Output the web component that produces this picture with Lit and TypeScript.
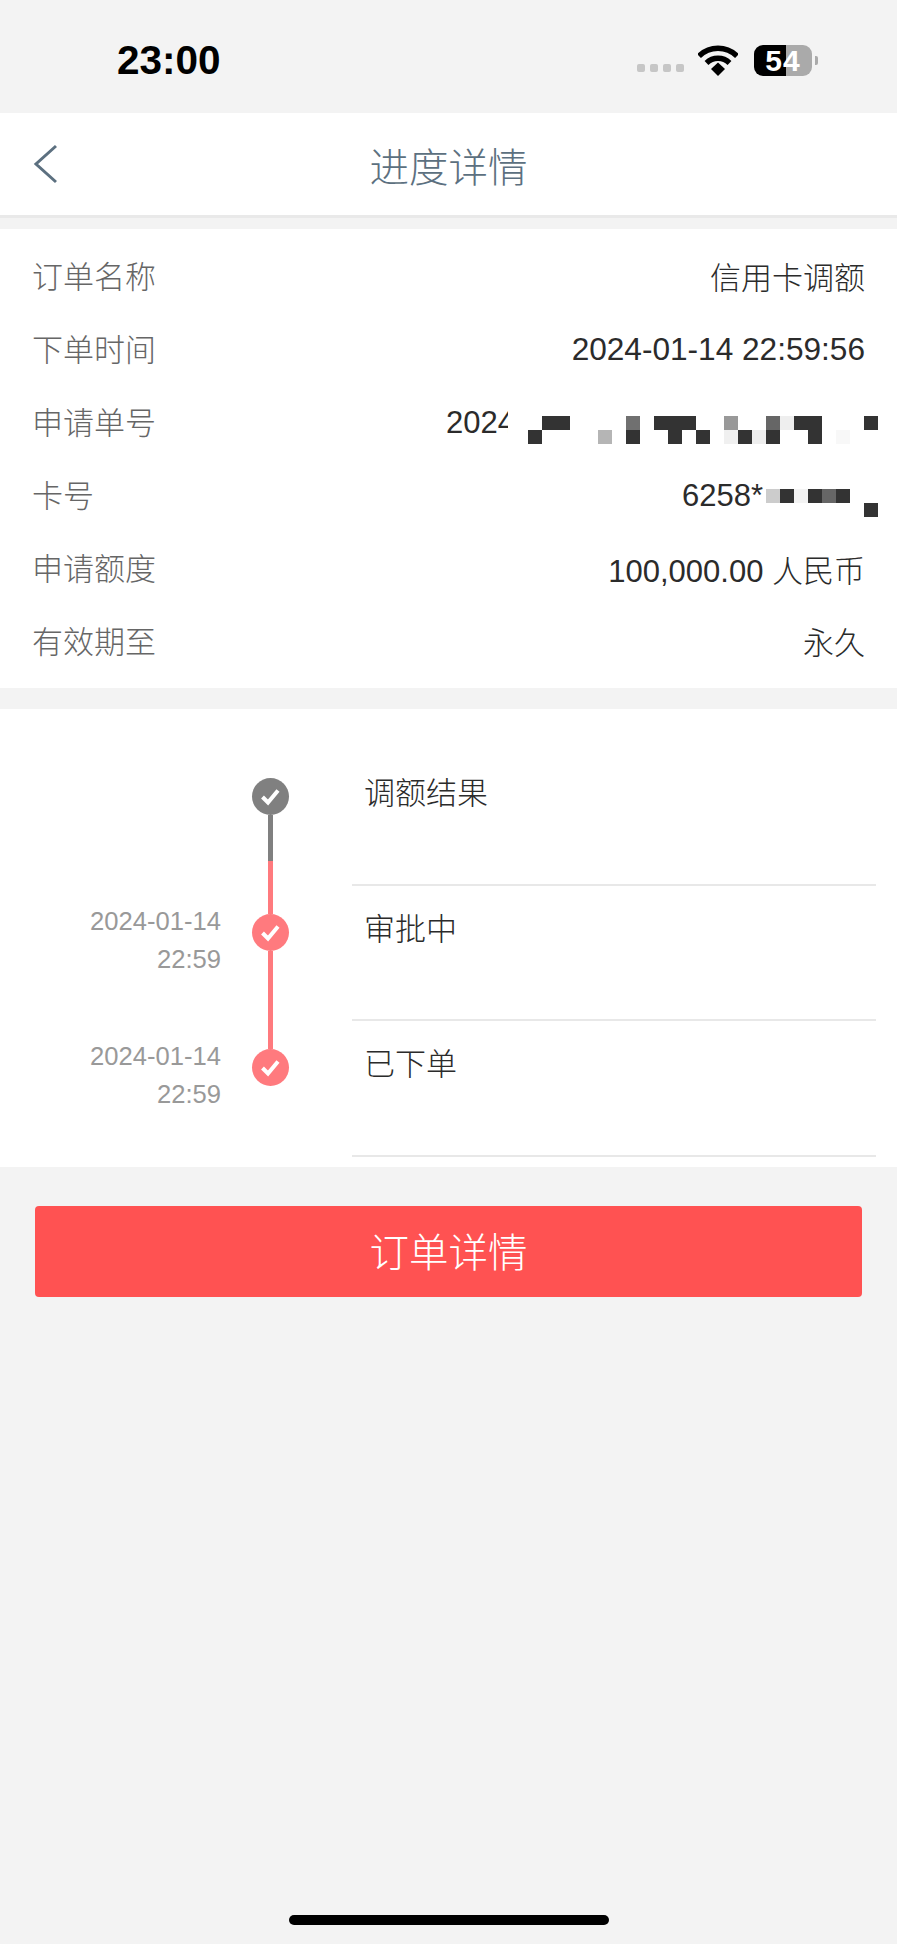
import { LitElement, html, css, svg } from 'lit';
import { customElement } from 'lit/decorators.js';
import { classMap } from 'lit/directives/class-map.js';

// Mosaic cells as [row, col, colour], used for the blurred numbers
type Cell = [number, number, string];

const D = '#333333';

const ORDER_NO_CELLS: Cell[] = [
	[0, 1, D], [0, 2, D], [0, 7, '#707070'], [0, 9, D], [0, 10, D], [0, 11, D],
	[0, 14, '#999999'], [0, 17, '#666666'], [0, 18, '#eeeeee'], [0, 19, D], [0, 20, D], [0, 24, D],
	[1, 0, D], [1, 5, '#b5b5b5'], [1, 7, D], [1, 10, D], [1, 12, D], [1, 14, '#f0f0f0'],
	[1, 15, D], [1, 16, '#eeeeee'], [1, 17, D], [1, 20, D], [1, 22, '#f8f8f8'],
];

const CARD_NO_CELLS: Cell[] = [
	[0, 0, '#cccccc'], [0, 1, D], [0, 2, '#f3f3f3'], [0, 3, D], [0, 4, '#666666'], [0, 5, D], [1, 7, D],
];

const mosaic = (cells: Cell[], cols: number) => html`
	<span class="mosaic" style="width:${cols * 14}px">
		${cells.map(([r, c, color]) => html`<i style="grid-row:${r + 1};grid-column:${c + 1};background:${color}"></i>`)}
	</span>
`;

const checkIcon = svg`<svg class="dot-svg" viewBox="0 0 37 37"><polyline points="10.5,19 16,24.5 26,12.5" fill="none" stroke="#fff" stroke-width="4"/></svg>`;

const STEPS = [
	{ label: '调额结果', date: '', time: '', tone: 'gray', first: true, last: false },
	{ label: '审批中', date: '2024-01-14', time: '22:59', tone: 'red', first: false, last: false },
	{ label: '已下单', date: '2024-01-14', time: '22:59', tone: 'red', first: false, last: true },
];

@customElement('app-root')
export class AppRoot extends LitElement {

	static styles = css`
		:host {
			display: block;
			width: 897px;
			font-family: "Liberation Sans", "Noto Sans CJK SC", sans-serif;
			color: #333;
		}
		.page {
			min-height: 1944px;
			background: #f3f3f3;
			display: flex;
			flex-direction: column;
		}

		/* status bar */
		.status {
			height: 113px;
			box-sizing: border-box;
			padding: 0 79px 0 117px;
			display: flex;
			align-items: center;
			justify-content: space-between;
		}
		.clock {
			font-size: 40.5px;
			font-weight: 700;
			color: #000;
			margin-top: 8px;
		}
		.status-right {
			display: flex;
			align-items: center;
			margin-top: 8px;
		}
		.signal {
			display: flex;
			gap: 5px;
			margin: 15px 14px 0 0;
		}
		.signal i {
			width: 8px;
			height: 8px;
			border-radius: 2px;
			background: #c6c6c6;
		}
		.wifi {
			width: 40px;
			height: 31px;
			margin-right: 16px;
			display: block;
		}
		.battery {
			width: 58px;
			height: 31px;
			border-radius: 9px;
			background: linear-gradient(to right, #000 32px, #aaa 32px);
			color: #fff;
			font-size: 30px;
			font-weight: 700;
			letter-spacing: 1px;
			line-height: 32px;
			text-align: center;
		}
		.nub {
			width: 3px;
			height: 9px;
			margin-left: 3px;
			border-radius: 0 2px 2px 0;
			background: #aaa;
		}

		/* navigation bar */
		.nav {
			height: 102px;
			background: #fff;
			border-bottom: 3px solid #e9e9e9;
			display: flex;
			align-items: center;
			justify-content: center;
			position: relative;
			font-size: 39.5px;
			font-weight: 300;
			color: #5c7080;
		}
		.back {
			position: absolute;
			left: 33px;
			top: 31px;
			width: 26px;
			height: 40px;
		}

		/* order details */
		.info {
			margin-top: 11px;
			padding: 11px 32px 10px;
			background: #fff;
			font-size: 31px;
			font-weight: 300;
		}
		.row {
			height: 73px;
			display: flex;
			align-items: center;
			justify-content: space-between;
		}
		.row .key {
			color: #666;
			margin-bottom: 4px;
		}
		.value {
			display: flex;
			align-items: center;
			color: #2b2b2b;
		}
		.value.cjk {
			margin-bottom: 3px;
		}
		.value.latin {
			font-size: 31.6px;
		}
		.clip {
			width: 62px;
			overflow: hidden;
			margin-right: 20px;
		}
		.mosaic {
			display: grid;
			grid-auto-columns: 14px;
			grid-auto-rows: 14px;
			grid-template-rows: 14px 14px;
			margin-right: -13px;
			margin-top: 14px;
		}
		.mosaic i {
			display: block;
		}
		.gap {
			width: 3px;
		}

		/* timeline */
		.timeline {
			margin-top: 21px;
			padding: 41px 21px 10px 0;
			background: #fff;
		}
		.step {
			height: 135.5px;
			display: flex;
		}
		.when {
			width: 221px;
			box-sizing: border-box;
			padding-top: 16px;
			text-align: right;
			font-size: 25.6px;
			line-height: 38px;
			color: #999;
		}
		.node {
			width: 37px;
			margin: 0 63px 0 31px;
			display: flex;
			flex-direction: column;
			align-items: center;
		}
		.stub {
			width: 5px;
			height: 28px;
			flex: none;
			background: #ff7a7e;
		}
		.stub.none, .tail.none {
			background: transparent;
		}
		.dot {
			width: 37px;
			height: 37px;
			flex: none;
			border-radius: 50%;
			background: #ff7a7e;
		}
		.dot.gray {
			background: #808080;
		}
		.dot-svg {
			display: block;
			width: 37px;
			height: 37px;
		}
		.tail {
			width: 5px;
			flex: 1;
			background: #ff7a7e;
		}
		.tail.split {
			background: linear-gradient(to bottom, #808080 46px, #ff7a7e 46px);
		}
		.label {
			flex: 1;
			box-sizing: border-box;
			padding: 22px 0 0 12px;
			border-bottom: 2px solid #e8e8e8;
			font-size: 31px;
			font-weight: 300;
			line-height: 44px;
			color: #2b2b2b;
		}

		/* button */
		.action {
			margin: 39px 35px 0;
			height: 91px;
			box-sizing: border-box;
			padding-bottom: 4px;
			border-radius: 4px;
			background: #ff5252;
			color: #fff;
			font-size: 39.5px;
			font-weight: 300;
			display: flex;
			align-items: center;
			justify-content: center;
		}

		.home {
			width: 320px;
			height: 10px;
			margin: auto auto 19px;
			border-radius: 5px;
			background: #000;
		}
	`;

	render() {
		return html`
			<div class="page">
				<div class="status">
					<span class="clock">23:00</span>
					<div class="status-right">
						<div class="signal"><i></i><i></i><i></i><i></i></div>
						<svg class="wifi" viewBox="0 0 40 31">
							<path d="M1 11 A27 27 0 0 1 39 11" fill="none" stroke="#000" stroke-width="5.5"/>
							<path d="M8.5 18 A16.5 16.5 0 0 1 31.5 18" fill="none" stroke="#000" stroke-width="5.5"/>
							<path d="M13 24 L20 17.5 L27 24 L20 31 Z" fill="#000"/>
						</svg>
						<div class="battery">54</div>
						<div class="nub"></div>
					</div>
				</div>

				<div class="nav">
					<svg class="back" viewBox="0 0 26 40">
						<polyline points="23,2 3,20 23,38" fill="none" stroke="#5c7080" stroke-width="3"/>
					</svg>
					进度详情
				</div>

				<div class="info">
					<div class="row"><span class="key">订单名称</span><span class="value cjk">信用卡调额</span></div>
					<div class="row"><span class="key">下单时间</span><span class="value latin">2024-01-14 22:59:56</span></div>
					<div class="row">
						<span class="key">申请单号</span>
						<span class="value"><span class="clip">2024</span>${mosaic(ORDER_NO_CELLS, 25)}</span>
					</div>
					<div class="row">
						<span class="key">卡号</span>
						<span class="value">6258*<span class="gap"></span>${mosaic(CARD_NO_CELLS, 8)}</span>
					</div>
					<div class="row"><span class="key">申请额度</span><span class="value">100,000.00 人民币</span></div>
					<div class="row"><span class="key">有效期至</span><span class="value cjk">永久</span></div>
				</div>

				<div class="timeline">
					${STEPS.map(step => html`
						<div class="step">
							<div class="when">${step.date}<br />${step.time}</div>
							<div class="node">
								<div class=${classMap({ stub: true, none: step.first })}></div>
								<div class=${classMap({ dot: true, gray: step.tone === 'gray' })}>${checkIcon}</div>
								<div class=${classMap({ tail: true, split: step.first, none: step.last })}></div>
							</div>
							<div class="label">${step.label}</div>
						</div>
					`)}
				</div>

				<div class="action">订单详情</div>
				<div class="home"></div>
			</div>
		`;
	}
}
